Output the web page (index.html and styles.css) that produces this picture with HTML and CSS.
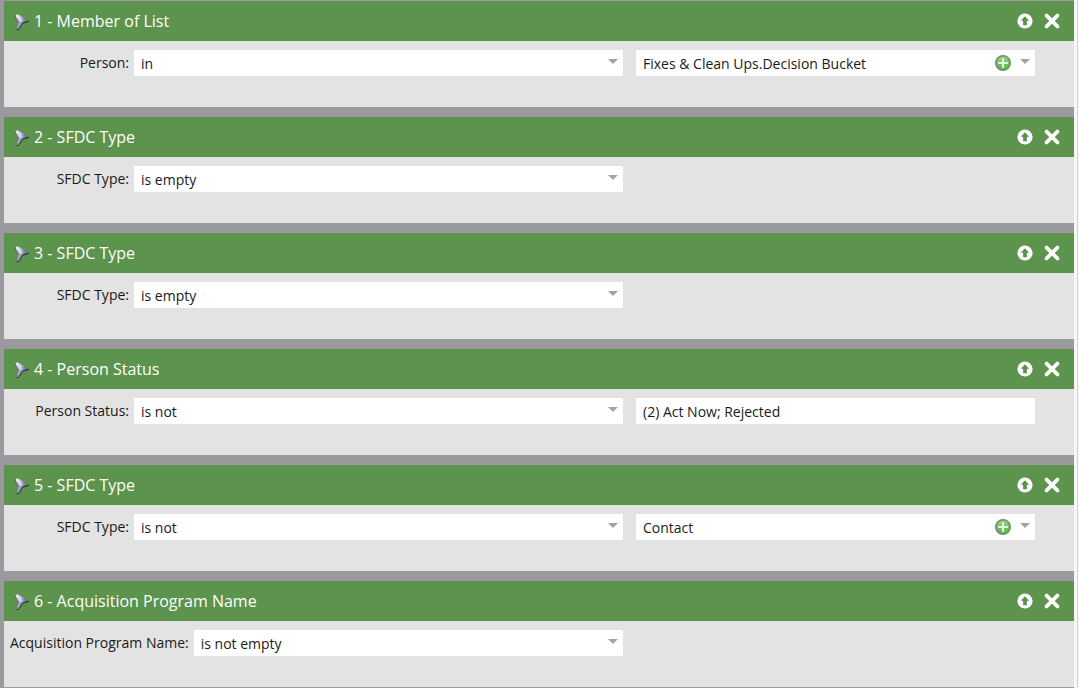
FILE: index.html
```html
<!DOCTYPE html>
<html lang="en">
<head>
<meta charset="utf-8">
<title>Smart List Filters</title>
<link rel="stylesheet" href="styles.css">
</head>
<body>
<svg class="defs" width="0" height="0" aria-hidden="true">
  <defs>
    <linearGradient id="fg" x1="0" y1="0" x2="1" y2="0.6">
      <stop offset="0" stop-color="#ffffff"/>
      <stop offset="0.45" stop-color="#a9b0d4"/>
      <stop offset="1" stop-color="#39405e"/>
    </linearGradient>
    <linearGradient id="pg" x1="0" y1="0" x2="0" y2="1">
      <stop offset="0" stop-color="#8ed878"/>
      <stop offset="1" stop-color="#58b044"/>
    </linearGradient>
    <symbol id="funnel" viewBox="0 0 16 18">
      <path d="M1 2 C3 .8 5 1.5 7 3 L15 8.4 L9 10 L4.6 16.4 C3.8 17.4 2.8 17 3 15.8 L4.6 9.6 C3 7 1.6 4.4 1 2 Z" fill="url(#fg)"/>
      <path d="M15 8.4 L9 10 L4.6 16.4 C3.8 17.4 2.8 17 3 15.8" fill="none" stroke="#20252f" stroke-width="1" stroke-linejoin="round"/>
      <path d="M1 2 C1.6 4.4 3 7 4.6 9.6" fill="none" stroke="#3c4552" stroke-width=".8"/>
      <path d="M3.4 3 L8.5 8.5 M6.4 4.8 L6 9" stroke="#fff" stroke-width="1" opacity=".8"/>
    </symbol>
    <symbol id="up" viewBox="0 0 16 16">
      <circle cx="8" cy="8" r="7.6" fill="#fff"/>
      <path d="M8 3.2 L12.2 7.8 L9.9 7.8 L9.9 12.2 L6.1 12.2 L6.1 7.8 L3.8 7.8 Z" fill="#5c934d"/>
    </symbol>
    <symbol id="close" viewBox="0 0 16 16">
      <path d="M2.6 2.6 L13.4 13.4 M13.4 2.6 L2.6 13.4" stroke="#fff" stroke-width="3.8" stroke-linecap="round"/>
    </symbol>
    <symbol id="plus" viewBox="0 0 16 16">
      <circle cx="8" cy="8" r="7.3" fill="url(#pg)" stroke="#7b8478" stroke-width="1.4"/>
      <path d="M8 3.2 V12.8 M3.2 8 H12.8" stroke="#e6f6df" stroke-width="2.2"/>
    </symbol>
  </defs>
</svg>
<div class="page">
<main class="filters">
  <section class="filter">
    <header class="filter-head">
      <svg class="funnel"><use href="#funnel"/></svg>
      <h2 class="filter-title">1 - Member of List</h2>
      <svg class="head-icon"><use href="#up"/></svg>
      <svg class="head-icon"><use href="#close"/></svg>
    </header>
    <div class="filter-body">
      <div class="primary">
        <span class="field-label">Person:</span>
        <div class="select"><span class="select-text">in</span><span class="caret"></span></div>
      </div>
      <div class="select value">
        <span class="select-text">Fixes &amp; Clean Ups.Decision Bucket</span>
        <svg class="plus"><use href="#plus"/></svg><span class="caret"></span>
      </div>
    </div>
  </section>
  <section class="filter">
    <header class="filter-head">
      <svg class="funnel"><use href="#funnel"/></svg>
      <h2 class="filter-title">2 - SFDC Type</h2>
      <svg class="head-icon"><use href="#up"/></svg>
      <svg class="head-icon"><use href="#close"/></svg>
    </header>
    <div class="filter-body">
      <div class="primary">
        <span class="field-label">SFDC Type:</span>
        <div class="select"><span class="select-text">is empty</span><span class="caret"></span></div>
      </div>
    </div>
  </section>
  <section class="filter">
    <header class="filter-head">
      <svg class="funnel"><use href="#funnel"/></svg>
      <h2 class="filter-title">3 - SFDC Type</h2>
      <svg class="head-icon"><use href="#up"/></svg>
      <svg class="head-icon"><use href="#close"/></svg>
    </header>
    <div class="filter-body">
      <div class="primary">
        <span class="field-label">SFDC Type:</span>
        <div class="select"><span class="select-text">is empty</span><span class="caret"></span></div>
      </div>
    </div>
  </section>
  <section class="filter">
    <header class="filter-head">
      <svg class="funnel"><use href="#funnel"/></svg>
      <h2 class="filter-title">4 - Person Status</h2>
      <svg class="head-icon"><use href="#up"/></svg>
      <svg class="head-icon"><use href="#close"/></svg>
    </header>
    <div class="filter-body">
      <div class="primary">
        <span class="field-label">Person Status:</span>
        <div class="select"><span class="select-text">is not</span><span class="caret"></span></div>
      </div>
      <div class="select value">
        <span class="select-text">(2) Act Now; Rejected</span>
      </div>
    </div>
  </section>
  <section class="filter">
    <header class="filter-head">
      <svg class="funnel"><use href="#funnel"/></svg>
      <h2 class="filter-title">5 - SFDC Type</h2>
      <svg class="head-icon"><use href="#up"/></svg>
      <svg class="head-icon"><use href="#close"/></svg>
    </header>
    <div class="filter-body">
      <div class="primary">
        <span class="field-label">SFDC Type:</span>
        <div class="select"><span class="select-text">is not</span><span class="caret"></span></div>
      </div>
      <div class="select value">
        <span class="select-text">Contact</span>
        <svg class="plus"><use href="#plus"/></svg><span class="caret"></span>
      </div>
    </div>
  </section>
  <section class="filter">
    <header class="filter-head">
      <svg class="funnel"><use href="#funnel"/></svg>
      <h2 class="filter-title">6 - Acquisition Program Name</h2>
      <svg class="head-icon"><use href="#up"/></svg>
      <svg class="head-icon"><use href="#close"/></svg>
    </header>
    <div class="filter-body">
      <div class="primary">
        <span class="field-label">Acquisition Program Name:</span>
        <div class="select"><span class="select-text">is not empty</span><span class="caret"></span></div>
      </div>
    </div>
  </section>
</main>
<div class="edge"></div>
</div>
</body>
</html>
```
FILE: styles.css
```css
* { box-sizing: border-box; }
html, body { height: 100%; }
body {
  margin: 0;
  background: #f7f7f7;
  font-family: "Open Sans", "Liberation Sans", sans-serif;
  overflow: hidden;
}
.defs { display: block; height: 0; }
.page { display: flex; height: 688px; }
.edge { width: 1px; margin-left: 3px; background: #d4d4d4; }
.filters {
  width: 1074px;
  height: 688px;
  padding: 1px 0 1px 4px;
  background: #9a999e;
  display: flex;
  flex-direction: column;
  gap: 10px;
}
.filter { display: flex; flex-direction: column; }
.filter-head {
  height: 40px;
  background: #5c934d;
  display: flex;
  align-items: center;
  padding: 0 14px 0 10px;
  color: #fff;
}
.funnel { width: 16px; height: 18px; margin-top: 2px; flex: none; }
.filter-title {
  margin: 0 0 0 4px;
  flex: 1;
  font-size: 16px;
  font-weight: 400;
  line-height: 22px;
}
.head-icon { width: 16px; height: 16px; margin-left: 11px; flex: none; }
.filter-body {
  height: 66px;
  background: #e3e3e3;
  padding-top: 9px;
  display: flex;
  align-items: flex-start;
  gap: 13px;
}
.primary { width: 619px; display: flex; }
.field-label {
  min-width: 125px;
  padding-left: 6px;
  padding-top: 1px;
  margin-right: 5px;
  font-size: 14px;
  line-height: 24px;
  text-align: right;
  color: #1a1a1a;
  white-space: nowrap;
}
.select {
  flex: 1;
  height: 26px;
  background: #fff;
  display: flex;
  align-items: center;
  padding: 0 5px 0 7px;
  font-size: 14px;
  color: #1a1a1a;
}
.value { flex: none; width: 399px; }
.select-text { flex: 1; padding-top: 2px; line-height: 26px; white-space: nowrap; }
.caret {
  width: 0;
  height: 0;
  margin-bottom: 4px;
  border-left: 5px solid transparent;
  border-right: 5px solid transparent;
  border-top: 5px solid #a3a3a3;
}
.plus { width: 16px; height: 16px; margin-right: 9px; flex: none; }
```
